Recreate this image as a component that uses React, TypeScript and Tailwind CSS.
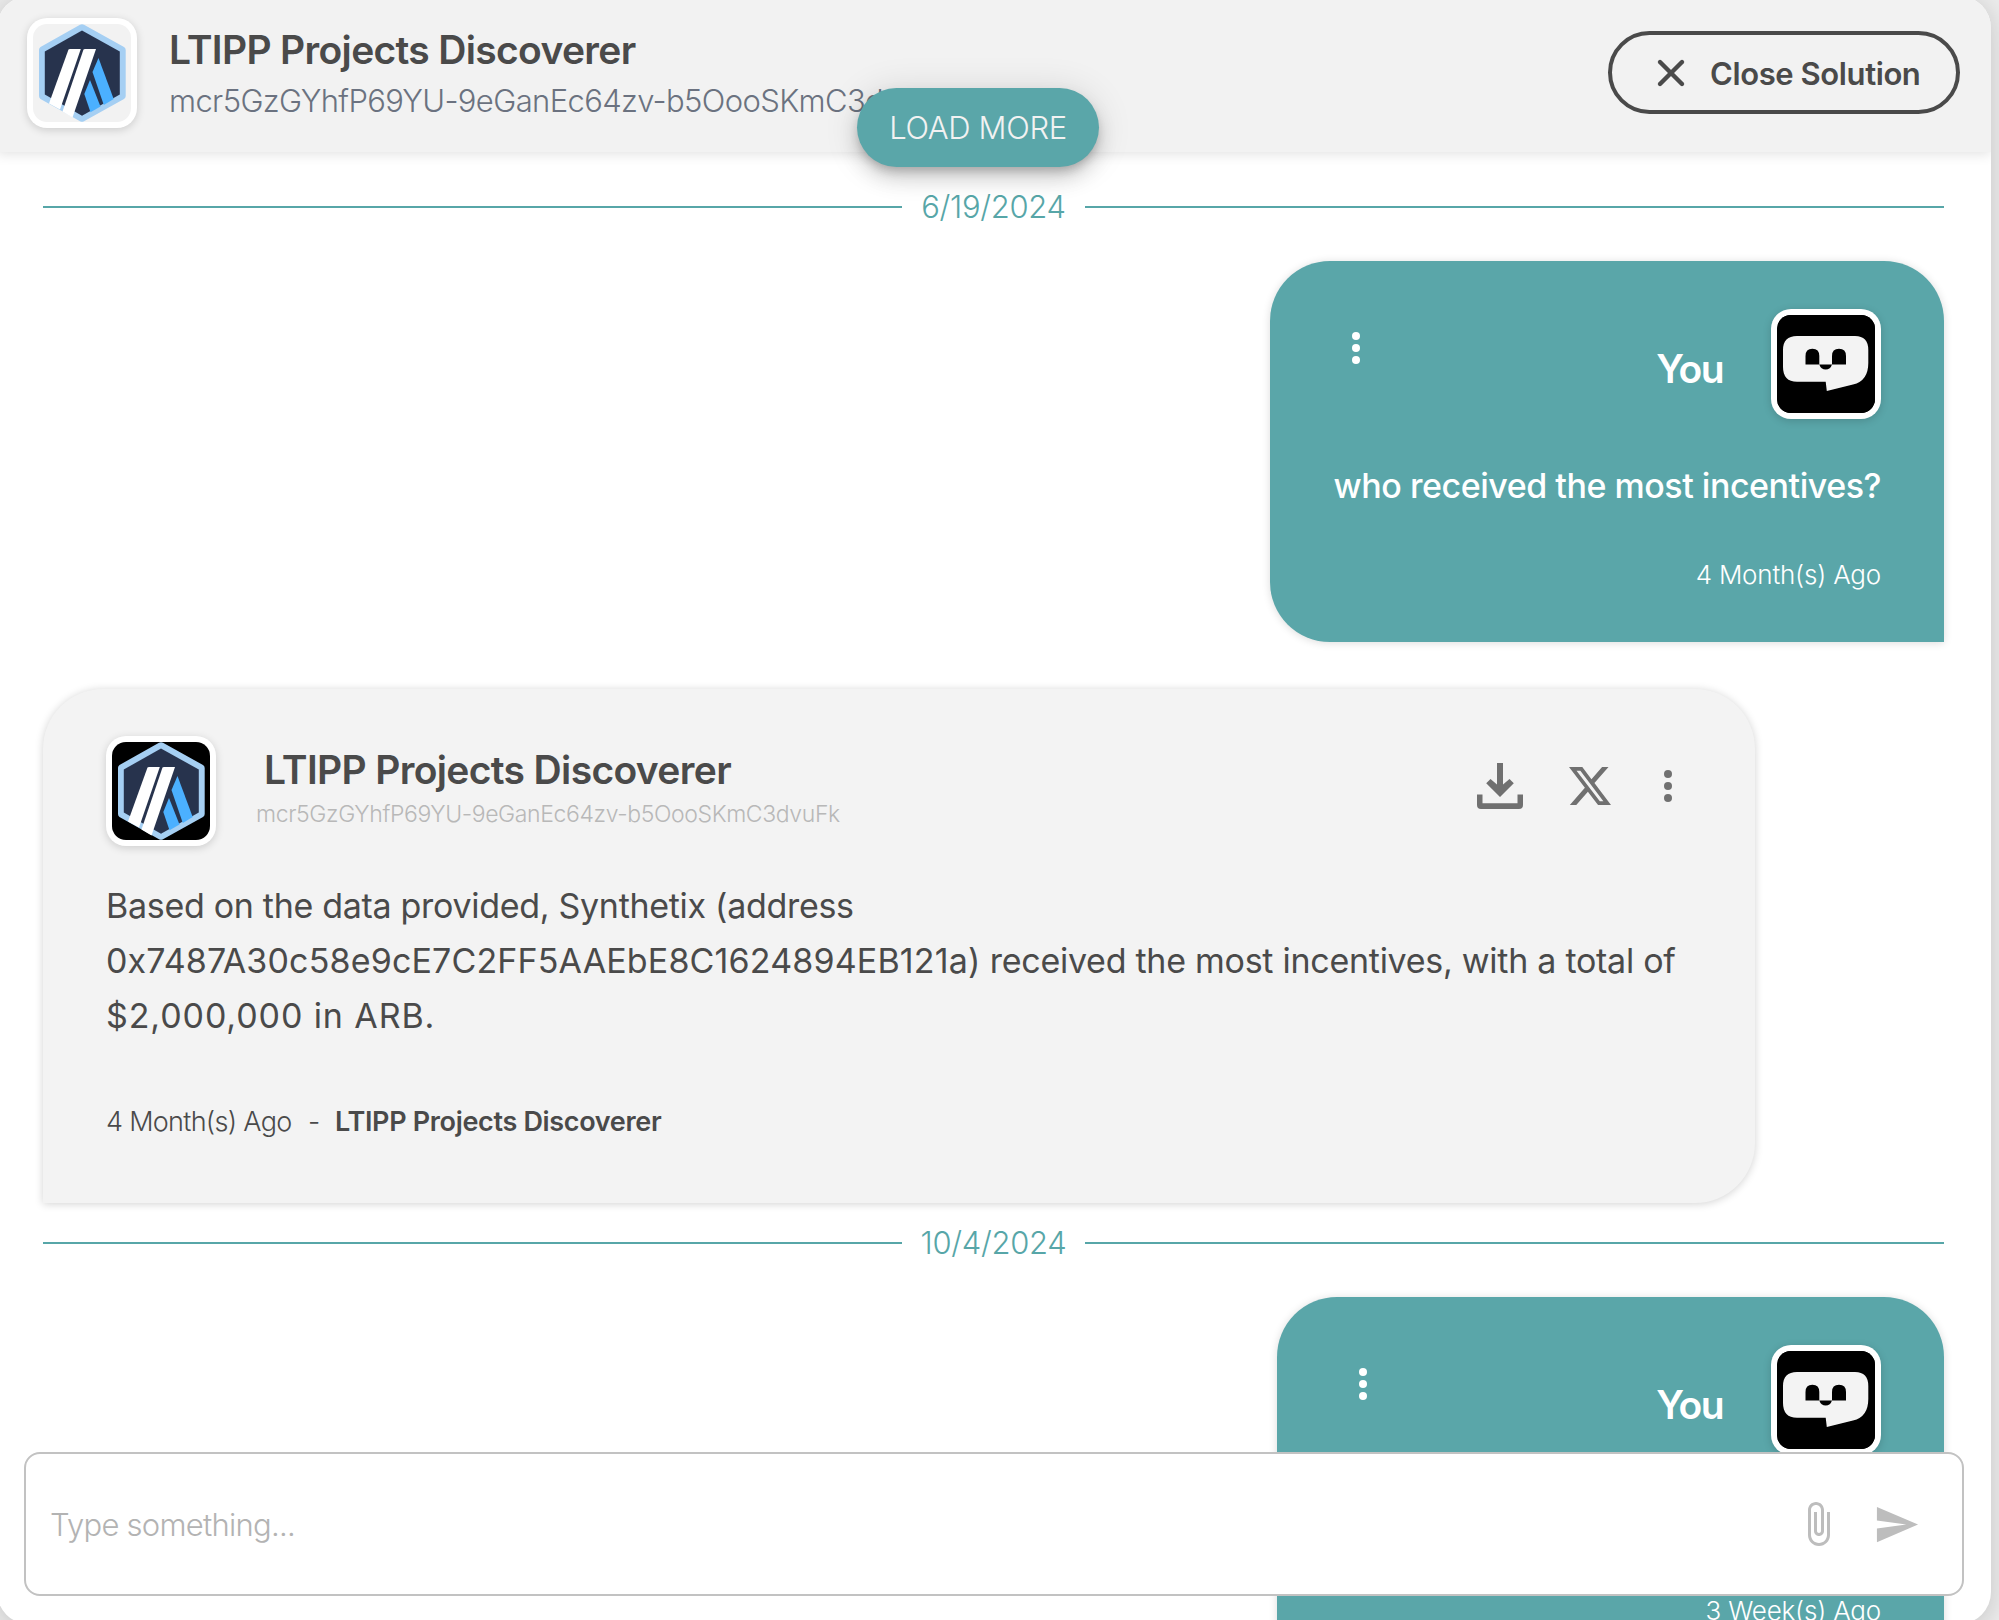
import type { ReactNode } from "react";
import { X } from "lucide-react";

const AGENT = "LTIPP Projects Discoverer";
const AGENT_ID = "mcr5GzGYhfP69YU-9eGanEc64zv-b5OooSKmC3dvuFk";

function ArbitrumLogo({ className = "" }: { className?: string }) {
  return (
    <svg viewBox="0 0 98 98" className={`size-full ${className}`}>
      <path d="M47 .8Q49 -.4 51 .8L91 23Q92.700 24 92.700 26V72Q92.700 74 91 75L51 97.200Q49 98.400 47 97.200L7.500 75Q6 74 6 72V26Q6 24 7.500 23Z" fill="#a5cff3" />
      <path d="M49 6.500L86.800 27.500V70.500L49 91.800L11.800 70.500V27.500Z" fill="#27334d" />
      <path d="M35.500 25.500Q36 25 37 25H47.800L27 85.500L16 79.500Z" fill="#fff" />
      <path d="M50.500 25.500Q51 25 52 25H63L39.500 93.500L29.500 87.500Z" fill="#fff" />
      <path d="M65.500 34L59.500 48L70.800 81L80.700 75Z" fill="#4bb0ff" />
      <path d="M57 56L51.300 70L57.500 88.300L67.500 82.500Z" fill="#4bb0ff" />
    </svg>
  );
}

function BotFace() {
  return (
    <svg viewBox="0 0 98 98" className="size-full bg-black">
      <path d="M20 21H78Q91.300 21 91.300 35V48Q91.300 66 76 69.500L49.800 76L48.700 66.700H20Q6 66.700 6 52V35Q6 21 20 21Z" fill="#f3f3f3" />
      <path d="M28.500 49.500V41Q28.500 33.800 35.400 33.800Q42.300 33.800 42.300 41V49.500Z" fill="#000" />
      <path d="M55 49.500V41Q55 33.800 62 33.800Q69 33.800 69 41V49.500Z" fill="#000" />
      <path d="M42.300 49.500H55Q53.500 54.500 48.700 54.500Q43.900 54.500 42.300 49.500Z" fill="#000" />
    </svg>
  );
}

function Avatar({ children, className = "bg-black" }: { children: ReactNode; className?: string }) {
  return (
    <div className="size-[110px] shrink-0 rounded-[20px] bg-white p-1.5 shadow-[0_2px_8px_rgba(0,0,0,0.16)]">
      <div className={`size-[98px] overflow-hidden rounded-[14px] ${className}`}>{children}</div>
    </div>
  );
}

function Dots({ className }: { className: string }) {
  return (
    <div className={`flex w-2 shrink-0 flex-col gap-1 ${className}`}>
      <span className="size-2 rounded-full bg-current" />
      <span className="size-2 rounded-full bg-current" />
      <span className="size-2 rounded-full bg-current" />
    </div>
  );
}

function DateDivider({ date }: { date: string }) {
  return (
    <div className="flex h-10 items-center text-[#57a6a8]">
      <div className="h-0.5 flex-1 bg-current" />
      <div className="w-[183px] text-center text-[31px] leading-10 font-light tracking-[-0.3px]">{date}</div>
      <div className="h-0.5 flex-1 bg-current" />
    </div>
  );
}

function UserMessage({ text, time, className }: { text: string; time: string; className: string }) {
  return (
    <div className={`flex h-[381px] flex-col self-end rounded-[60px] rounded-br-none bg-[#5aa6a9] px-[63px] pt-12 text-white shadow-[0_1px_8px_rgba(0,0,0,0.14)] ${className}`}>
      <div className="flex">
        <Dots className="mt-[23px] ml-[19px]" />
        <div className="mt-9 mr-12 ml-auto text-[39px] leading-[48px] font-semibold tracking-[-1.6px]">You</div>
        <Avatar>
          <BotFace />
        </Avatar>
      </div>
      <div className="mt-[39px] h-[55px] text-right text-[34px] leading-[55px] font-medium tracking-[-0.47px] whitespace-nowrap">{text}</div>
      <div className="mt-[46px] text-right text-[26px] leading-8 font-light tracking-[-0.2px]">{time}</div>
    </div>
  );
}

function DownloadIcon() {
  return (
    <svg width="46" height="46" viewBox="0 0 46 46" fill="#707070">
      <path d="M20 0H26V21.500L32.500 16L36.800 20.300L23 34L9.200 20.300L13.500 16L20 21.500Z" />
      <path d="M0 31.500H5.500V40.300H40.500V31.500H46V42Q46 46 42 46H4Q0 46 0 42Z" />
    </svg>
  );
}

function XLogo() {
  return (
    <svg width="42" height="42" viewBox="0 0 16 16" fill="#707070">
      <path d="M12.600.75h2.454l-5.360 6.142L16 15.250h-4.937l-3.867-5.070-4.425 5.070H.316l5.733-6.570L0 .75h5.063l3.495 4.633L12.601.75Zm-.86 13.028h1.360L4.323 2.145H2.865z" />
    </svg>
  );
}

function AgentMessage() {
  return (
    <div className="flex h-[514px] w-[1712px] flex-col rounded-[60px] rounded-bl-none bg-[#f3f3f3] px-[63px] pt-[47px] text-[#4a4a4a] shadow-[0_1px_8px_rgba(0,0,0,0.18)]">
      <div className="flex">
        <Avatar>
          <ArbitrumLogo />
        </Avatar>
        <div className="ml-10">
          <div className="mt-2.5 ml-2 text-[39px] leading-[48px] font-semibold tracking-[-0.65px] whitespace-nowrap">{AGENT}</div>
          <div className="mt-1 text-[23px] leading-8 font-light tracking-[-0.38px] text-[#b8b8b8]">{AGENT_ID}</div>
        </div>
        <div className="mt-[27px] ml-auto flex h-[46px] items-center">
          <DownloadIcon />
          <div className="ml-[46px]">
            <XLogo />
          </div>
          <Dots className="mr-[20px] ml-[53px] text-[#707070]" />
        </div>
      </div>
      <div className="mt-8 text-[34px] leading-[55px] whitespace-nowrap">
        <div className="tracking-[-0.3px]">Based on the data provided, Synthetix (address</div>
        <div className="tracking-[-0.27px]">
          <span className="tracking-[0.15px]">0x7487A30c58e9cE7C2FF5AAEbE8C1624894EB121a)</span> received the most incentives, with a total of
        </div>
        <div className="tracking-[0.9px]">$2,000,000 in ARB.</div>
      </div>
      <div className="mt-[63px] flex text-[27px] leading-8">
        <span className="w-[202px] font-light tracking-[-0.7px]">4 Month(s) Ago</span>
        <span className="w-[27px] font-light">-</span>
        <span className="font-semibold tracking-[-0.33px]">{AGENT}</span>
      </div>
    </div>
  );
}

export default function App() {
  return (
    <div className="h-[1620px] w-[1999px] overflow-hidden bg-[#ebebeb] font-['Inter',sans-serif]">
      <div className="relative -mt-1 -ml-[3px] flex h-[1628px] w-[1994px] flex-col overflow-hidden rounded-[32px] bg-white shadow-[0_4px_24px_rgba(0,0,0,0.16)]">
        <header className="z-10 flex h-[156px] shrink-0 bg-[#f2f2f2] pt-[22px] pr-[31px] pl-[30px] shadow-[0_2px_12px_rgba(0,0,0,0.12)]">
          <Avatar className="bg-[#f2f2f2]">
            <ArbitrumLogo />
          </Avatar>
          <div className="ml-8">
            <div className="mt-2 text-[39px] leading-[48px] font-semibold tracking-[-0.67px] text-[#4a4a4a]">{AGENT}</div>
            <div className="mt-[7px] text-[31px] leading-10 font-light tracking-[-0.63px] text-[#6b7280]">{AGENT_ID}</div>
          </div>
          <button className="mt-[13px] ml-auto flex h-[83px] w-[352px] items-center rounded-full border-4 border-[#4a4a4a] pl-[37px] text-[#4a4a4a]">
            <X size={44} strokeWidth={2.4} />
            <span className="ml-[17px] pt-[3px] text-[31px] font-semibold tracking-[-0.4px] whitespace-nowrap">Close Solution</span>
          </button>
        </header>
        <button className="absolute top-[92px] left-[860px] z-20 h-[79px] w-[242px] rounded-full bg-[#5aa6a9] pt-0.5 text-[31px] font-light tracking-[-0.33px] text-[#f2f2f2] shadow-[0_6px_10px_-2px_rgba(0,0,0,0.2),0_12px_20px_rgba(0,0,0,0.14),0_2px_36px_rgba(0,0,0,0.12)]">
          LOAD MORE
        </button>

        <main className="flex flex-col pt-[35px] pr-[47px] pl-[46px]">
          <DateDivider date="6/19/2024" />
          <div className="h-[34px]" />
          <UserMessage text="who received the most incentives?" time="4 Month(s) Ago" className="w-[674px]" />
          <div className="h-[47px] shrink-0" />
          <AgentMessage />
          <div className="h-5 shrink-0" />
          <DateDivider date="10/4/2024" />
          <div className="h-[34px]" />
          <UserMessage text="" time="3 Week(s) Ago" className="w-[667px]" />
        </main>

        <div className="absolute top-[1456px] left-[27px] flex h-36 w-[1940px] items-center rounded-2xl border-2 border-[#c2c2c2] bg-white pl-6">
          <span className="pt-0.5 text-[31px] font-light tracking-[-0.75px] text-[#b3b3b3]">Type something...</span>
          <div className="mr-[42px] ml-auto flex items-center gap-[31px] text-[#bdbdbd]">
            <svg width="48" height="48" viewBox="0 0 24 24" fill="currentColor">
              <path d="M16.500 6v11.500c0 2.210-1.790 4-4 4s-4-1.790-4-4V5c0-1.380 1.120-2.500 2.500-2.500s2.500 1.120 2.500 2.500v10.500c0 .55-.45 1-1 1s-1-.45-1-1V6H10v9.500c0 1.380 1.120 2.500 2.500 2.500s2.500-1.120 2.500-2.500V5c0-2.210-1.790-4-4-4S7 2.790 7 5v12.500c0 3.040 2.460 5.500 5.500 5.500s5.500-2.460 5.500-5.500V6h-1.500z" />
            </svg>
            <svg width="47" height="47" viewBox="0 0 24 24" fill="currentColor">
              <path d="M2.010 21L23 12 2.010 3 2 10l15 2-15 2z" />
            </svg>
          </div>
        </div>
      </div>
    </div>
  );
}
